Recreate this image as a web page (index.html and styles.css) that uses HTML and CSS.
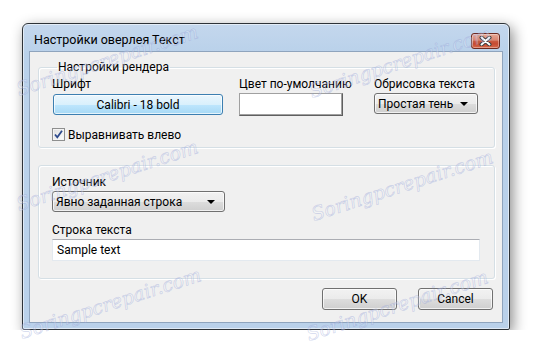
FILE: index.html
```html
<!DOCTYPE html>
<html>
<head>
<meta charset="utf-8">
<link rel="stylesheet" href="styles.css">
</head>
<body>
<div class="window">
  <div class="titlebar">
    <span class="title">Настройки оверлея Текст</span>
    <div class="close">
      <svg width="13" height="10" viewBox="0 0 13 10"><path d="M2.5 1.5 L10.5 8.5 M10.5 1.5 L2.5 8.5" stroke="#3b3b3b" stroke-width="4" stroke-linecap="round"/><path d="M2.5 1.5 L10.5 8.5 M10.5 1.5 L2.5 8.5" stroke="#ffffff" stroke-width="2" stroke-linecap="round"/></svg>
    </div>
  </div>
  <div class="client">
    <fieldset class="group g1">
      <legend>Настройки рендера</legend>
      <div class="row">
        <div class="col c-font">
          <div class="label">Шрифт</div>
          <div class="btn btn-blue font-btn">Calibri - 18 bold</div>
        </div>
        <div class="col c-color">
          <div class="label">Цвет по-умолчанию</div>
          <div class="colorbox"></div>
        </div>
        <div class="col c-outline">
          <div class="label">Обрисовка текста</div>
          <div class="combo outline-combo"><span>Простая тень</span><i class="arrow"></i></div>
        </div>
      </div>
      <div class="check">
        <span class="box"><svg width="11" height="11" viewBox="0 0 11 11"><path d="M2 5.5 L4.3 8.3 L9 1.8" fill="none" stroke="#2d4a8c" stroke-width="1.8"/></svg></span>
        <span>Выравнивать влево</span>
      </div>
    </fieldset>
    <div class="group g2">
      <div class="label">Источник</div>
      <div class="combo src-combo"><span>Явно заданная строка</span><i class="arrow"></i></div>
      <div class="label label2">Строка текста</div>
      <div class="textbox">Sample text</div>
    </div>
    <div class="buttons">
      <div class="btn dlg-btn">OK</div>
      <div class="btn dlg-btn">Cancel</div>
    </div>
  </div>
</div>
<div class="wm wm1">Soringpcrepair.com</div>
<div class="wm wm2">Soringpcrepair.com</div>
<div class="wm wm3">Soringpcrepair.com</div>
<div class="wm wm4">Soringpcrepair.com</div>
<div class="wm wm5">Soringpcrepair.com</div>
<div class="wm wm6">Soringpcrepair.com</div>
</body>
</html>
```

FILE: styles.css
```css
html, body {
  margin: 0;
  background: #ffffff;
}
body {
  padding: 23px 0 0 22px;
  font-family: Roboto, "Noto Sans", sans-serif;
  font-size: 12px;
  color: #000;
}
.window {
  position: relative;
  width: 488px;
  height: 307px;
  box-sizing: border-box;
  border: 1px solid #2e3338;
  border-radius: 6px 6px 2px 2px;
  background: linear-gradient(#c4d7ed, #b9d1ea 30px, #bad1ea);
  padding: 0 6px 6px;
  box-shadow: 3px 4px 14px rgba(0, 0, 0, 0.45), inset 0 0 0 1px rgba(255, 255, 255, 0.55);
  overflow: hidden;
}
.titlebar {
  height: 27px;
  display: flex;
  justify-content: space-between;
  align-items: flex-start;
}
.title {
  padding: 8px 0 0 5px;
  line-height: 16px;
  font-size: 12.5px;
}
.close {
  margin: 9px 3px 0 0;
  width: 29px;
  height: 16px;
  box-sizing: border-box;
  border: 1px solid #6d2a20;
  border-radius: 3px;
  background: linear-gradient(#e7a996 0%, #d98470 45%, #cb5a40 50%, #c74a31 70%, #d66a4c 100%);
  display: flex;
  align-items: center;
  justify-content: center;
  box-shadow: inset 0 0 0 1px rgba(255, 255, 255, 0.35);
}
.close svg { display: block; }
.client {
  height: 270px;
  border: 1px solid #8fa4bd;
  background: #f0f0f0;
  display: flex;
  flex-direction: column;
}
.group {
  margin: 0 7px 0 8px;
  border: 1px solid #d5dfe5;
  border-radius: 3px;
  box-shadow: inset 1px 1px 0 #ffffff, 1px 1px 0 #ffffff;
}
fieldset.g1 {
  margin-top: 8px;
  height: 88px;
  box-sizing: border-box;
  padding: 3px 13px 0 13px;
  min-width: 0;
}
.g1 legend {
  padding: 0 1px;
  margin-left: 5px;
  line-height: 14px;
  height: 14px;
}
.label {
  line-height: 14px;
  height: 14px;
  white-space: nowrap;
}
.row {
  display: flex;
  align-items: flex-start;
}
.col {
  display: flex;
  flex-direction: column;
}
.c-font { width: 171px; }
.c-color { margin-left: 16px; width: 104px; }
.c-outline { margin-left: 31px; width: 104px; }
.btn {
  box-sizing: border-box;
  border: 1px solid #707070;
  border-radius: 3px;
  background: linear-gradient(#f2f2f2 0%, #ebebeb 50%, #dddddd 51%, #cfcfcf 100%);
  box-shadow: inset 0 0 0 1px rgba(255, 255, 255, 0.7);
  display: flex;
  align-items: center;
  justify-content: center;
  line-height: 14px;
}
.btn-blue {
  border-color: #3c7fb1;
  background: linear-gradient(#eaf6fd 0%, #d9f0fc 50%, #bee6fd 51%, #a7d9f5 100%);
}
.font-btn {
  margin: 3px 0 0 1px;
  width: 170px;
  height: 21px;
}
.colorbox {
  margin-top: 2px;
  width: 104px;
  height: 23px;
  box-sizing: border-box;
  background: #ffffff;
  border: 1px solid #a0a0a0;
  border-right-color: #5f5f5f;
  border-bottom-color: #5f5f5f;
  box-shadow: inset -1px -1px 0 #a0a0a0;
}
.combo {
  box-sizing: border-box;
  border: 1px solid #707070;
  border-radius: 3px;
  background: linear-gradient(#f2f2f2 0%, #ebebeb 50%, #dddddd 51%, #cfcfcf 100%);
  box-shadow: inset 0 0 0 1px rgba(255, 255, 255, 0.7);
  display: flex;
  align-items: center;
  justify-content: space-between;
  padding: 0 9px 0 3px;
  height: 21px;
  line-height: 14px;
  white-space: nowrap;
}
.arrow {
  width: 0;
  height: 0;
  border-left: 4px solid transparent;
  border-right: 4px solid transparent;
  border-top: 4px solid #000;
}
.outline-combo {
  margin-top: 2px;
  width: 104px;
}
.check {
  margin-top: 11px;
  display: flex;
  align-items: center;
  height: 15px;
  line-height: 14px;
}
.check .box {
  width: 13px;
  height: 13px;
  box-sizing: border-box;
  border: 1px solid #8e8f8f;
  background: linear-gradient(135deg, #dcdcdc, #ffffff);
  box-shadow: inset 0 0 0 1px #f4f4f4;
  display: flex;
  align-items: center;
  justify-content: center;
  margin-right: 3px;
}
.check .box svg { display: block; }
.g2 {
  margin-top: 17px;
  height: 114px;
  box-sizing: border-box;
  padding: 9px 13px 0 13px;
  display: flex;
  flex-direction: column;
  align-items: flex-start;
}
.src-combo {
  margin-top: 2px;
  width: 173px;
}
.label2 { margin-top: 11px; }
.textbox {
  margin-top: 2px;
  width: 428px;
  height: 22px;
  box-sizing: border-box;
  background: #fff;
  border: 1px solid #e3e9ef;
  border-top-color: #abadb3;
  padding: 0 4px;
  line-height: 20px;
}
.buttons {
  margin: 9px 9px 0 0;
  display: flex;
  justify-content: flex-end;
  gap: 21px;
}
.dlg-btn {
  width: 75px;
  height: 22px;
}
.wm {
  position: absolute;
  width: 200px;
  height: 24px;
  line-height: 24px;
  text-align: center;
  font-family: "DejaVu Serif", serif;
  font-style: italic;
  font-size: 19px;
  color: rgba(255, 255, 255, 0.25);
  -webkit-text-stroke: 0.7px rgba(135, 150, 210, 0.38);
  transform: rotate(-18deg);
  white-space: nowrap;
  pointer-events: none;
}
.wm1 { left: 7px; top: 48px; }
.wm2 { left: 300px; top: 50px; }
.wm3 { left: 7px; top: 163px; }
.wm4 { left: 302px; top: 173px; }
.wm5 { left: 10px; top: 291px; }
.wm6 { left: 297px; top: 293px; }
```
